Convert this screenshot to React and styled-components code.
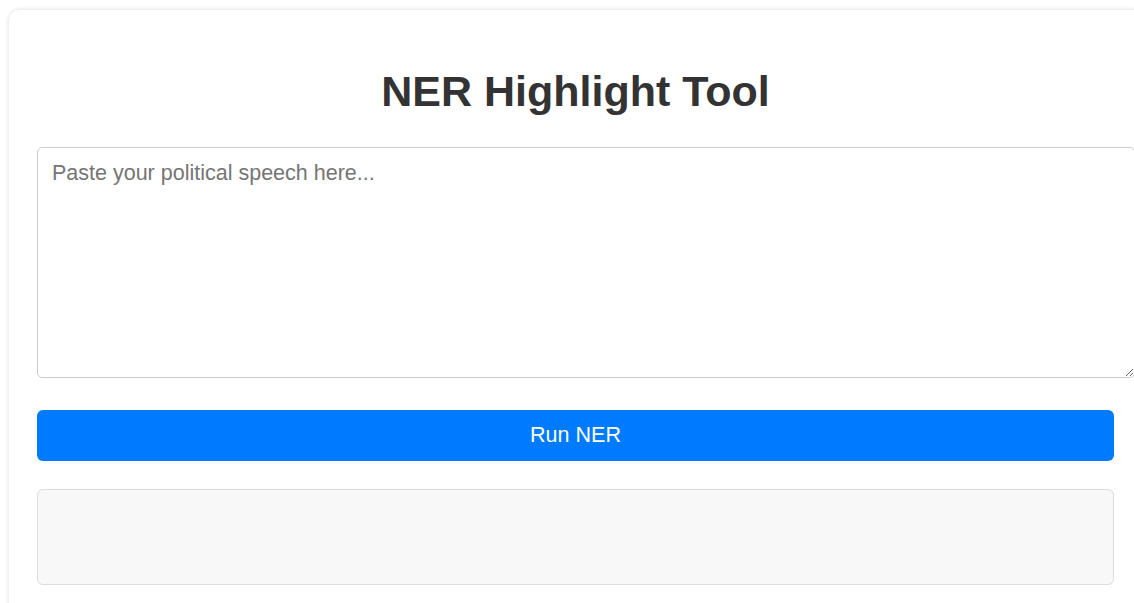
import React from "react";
import styled, { createGlobalStyle } from "styled-components";

const GlobalStyle = createGlobalStyle`
  html, body {
    margin: 0;
    padding: 0;
    background: #ffffff;
    overflow: hidden;
  }
  body {
    font-family: "Liberation Sans", Arial, sans-serif;
    color: #333333;
  }
`;

const Page = styled.main`
  padding: 10px 0 0 9px;
`;

const Card = styled.section`
  width: 1133px;
  box-sizing: border-box;
  padding: 28px 28px 40px;
  background: #ffffff;
  border-radius: 10px;
  box-shadow: 0 0 4px rgba(0, 0, 0, 0.16);
`;

const Title = styled.h1`
  margin: 29px 0 32px;
  font-size: 43px;
  line-height: 48px;
  font-weight: 700;
  text-align: center;
  color: #333333;
`;

const SpeechInput = styled.textarea`
  display: block;
  box-sizing: border-box;
  width: calc(100% + 21px);
  height: 231px;
  margin: 0;
  padding: 13px 14px;
  border: 1px solid #cccccc;
  border-radius: 5px;
  font-family: "Liberation Sans", Arial, sans-serif;
  font-size: 21.5px;
  line-height: 25px;
  color: #333333;
  resize: vertical;

  &::placeholder {
    color: #757575;
  }
`;

const RunButton = styled.button`
  display: block;
  width: 100%;
  height: 51px;
  margin-top: 32px;
  border: none;
  border-radius: 6px;
  background: #007bff;
  color: #ffffff;
  font-family: "Liberation Sans", Arial, sans-serif;
  font-size: 21.5px;
  cursor: pointer;
`;

const Output = styled.div`
  box-sizing: border-box;
  height: 96px;
  margin-top: 28px;
  background: #f8f8f8;
  border: 1px solid #dddddd;
  border-radius: 6px;
`;

export default function App() {
  return (
    <>
      <GlobalStyle />
      <Page>
        <Card>
          <Title>NER Highlight Tool</Title>
          <SpeechInput placeholder="Paste your political speech here..." />
          <RunButton>Run NER</RunButton>
          <Output />
        </Card>
      </Page>
    </>
  );
}
